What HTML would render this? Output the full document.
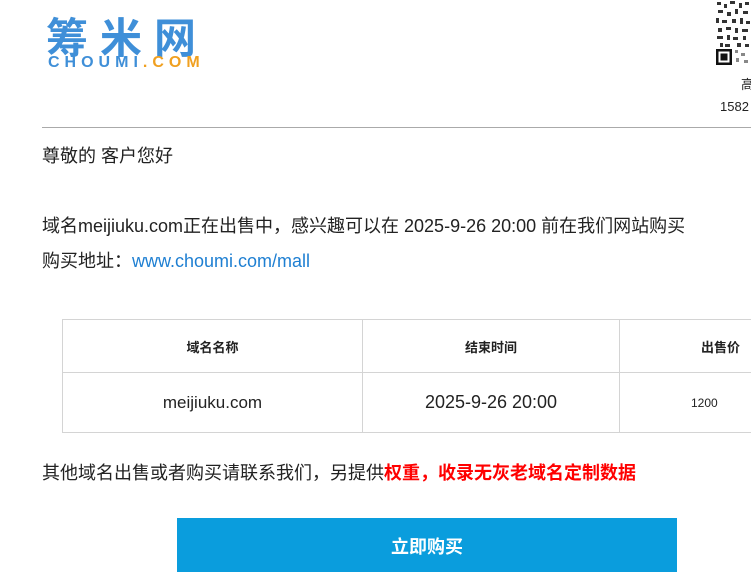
<!DOCTYPE html>
<html><head><meta charset="utf-8"><style>
body{margin:0;width:751px;height:572px;overflow:hidden;background:#fff;position:relative;font-family:"Liberation Sans","Noto Sans CJK SC",sans-serif;color:#222}
.a{position:absolute;white-space:nowrap}
.t{font-size:18px}
table{position:absolute;left:62px;top:319px;border-collapse:collapse;width:760px}
td{border:1px solid #d4d4d4;text-align:center;padding:0}
</style></head><body>
<div class="a" style="left:46px;top:16px;font-size:42px;font-weight:bold;color:#3f8fd8;letter-spacing:12px;line-height:46px">筹米网</div>
<div class="a" style="left:48px;top:55px;font-size:16px;font-weight:bold;letter-spacing:5px;color:#3f8fd8;line-height:15px">CHOUMI<span style="color:#f0a020">.COM</span></div>
<svg class="a" style="left:715px;top:0" width="36" height="68">
<rect width="36" height="68" fill="#fff"/>
<g fill="#333"><rect x="2" y="2" width="4" height="3"/><rect x="9" y="4" width="3" height="4"/><rect x="15" y="1" width="5" height="3"/><rect x="24" y="3" width="3" height="5"/><rect x="30" y="2" width="4" height="3"/><rect x="3" y="10" width="5" height="3"/><rect x="12" y="12" width="4" height="4"/><rect x="20" y="9" width="3" height="5"/><rect x="28" y="11" width="5" height="3"/><rect x="1" y="18" width="3" height="5"/><rect x="7" y="20" width="5" height="3"/><rect x="17" y="19" width="4" height="4"/><rect x="25" y="18" width="3" height="6"/><rect x="31" y="21" width="4" height="3"/><rect x="3" y="28" width="4" height="4"/><rect x="11" y="27" width="5" height="3"/><rect x="20" y="28" width="3" height="5"/><rect x="27" y="29" width="6" height="3"/><rect x="2" y="36" width="6" height="3"/><rect x="12" y="35" width="3" height="5"/><rect x="18" y="37" width="5" height="3"/><rect x="28" y="36" width="3" height="4"/><rect x="5" y="43" width="3" height="4"/><rect x="10" y="44" width="5" height="3"/><rect x="22" y="43" width="4" height="4"/><rect x="30" y="44" width="4" height="3"/></g>
<rect x="1" y="49" width="16" height="16" fill="#111"/><rect x="3.5" y="51.5" width="11" height="11" fill="#fff"/><rect x="5.5" y="53.5" width="7" height="7" fill="#111"/>
<g fill="#888"><rect x="20" y="50" width="3" height="3"/><rect x="26" y="53" width="4" height="3"/><rect x="21" y="58" width="3" height="4"/><rect x="29" y="60" width="4" height="3"/></g>
</svg>
<div class="a" style="left:741px;top:74px;font-size:13px">高</div>
<div class="a" style="left:720px;top:99px;font-size:13px">1582</div>
<div class="a" style="left:42px;top:127px;width:709px;height:1px;background:#aaa"></div>
<div class="a t" style="left:42px;top:142px">尊敬的 客户您好</div>
<div class="a t" style="left:42px;top:212px">域名meijiuku.com正在出售中，感兴趣可以在 2025-9-26 20:00 前在我们网站购买</div>
<div class="a t" style="left:42px;top:247px">购买地址：<span style="color:#1e7fd2">www.choumi.com/mall</span></div>
<table>
<tr style="height:53px;font-size:13px;font-weight:bold"><td style="width:299px">域名名称</td><td style="width:256px">结束时间</td><td>出售价</td></tr>
<tr style="height:60px"><td style="font-size:17px">meijiuku.com</td><td style="font-size:18px">2025-9-26 20:00</td><td style="font-size:12px;text-align:left;padding-left:71px">1200</td></tr>
</table>
<div class="a t" style="left:42px;top:459px">其他域名出售或者购买请联系我们，另提供<b style="color:#f00">权重，收录无灰老域名定制数据</b></div>
<div class="a" style="left:177px;top:518px;width:500px;height:54px;background:#0a9ddd;color:#fff;font-size:18px;font-weight:bold;text-align:center;line-height:58px">立即购买</div>
</body></html>
